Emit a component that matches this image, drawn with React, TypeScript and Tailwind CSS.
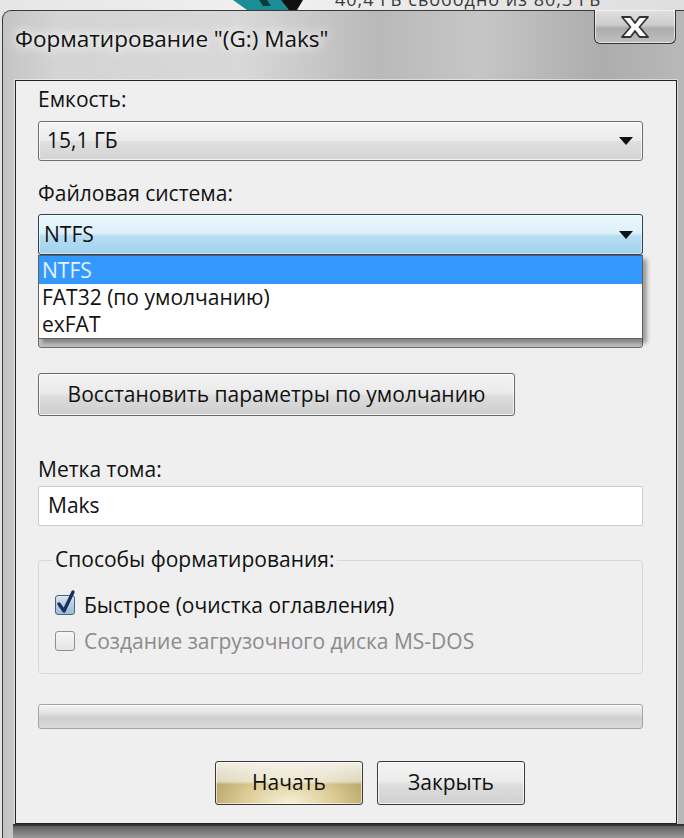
import React from "react";

function Arrow() {
  return (
    <svg width="14" height="8" viewBox="0 0 14 8" className="mr-[9px] shrink-0">
      <path d="M0 0 L14 0 L7 8 Z" fill="#111" />
    </svg>
  );
}

export default function App() {
  return (
    <div className="w-[684px] h-[838px] overflow-hidden bg-[#e4e4e4] font-['Open_Sans',sans-serif] text-[#111]">
      {/* desktop strip behind the window */}
      <div className="h-[10px] overflow-hidden flex items-start bg-[linear-gradient(90deg,#e6e6e6,#f0f0f0_40%,#dedede)]">
        <svg width="70" height="10" viewBox="0 0 70 10" className="ml-[233px] shrink-0">
          <path d="M0 0 L50 0 L58 10 L14 10 Z" fill="#1d8d95" />
          <path d="M48 0 L70 0 L64 10 L56 10 Z" fill="#111" />
          <path d="M26 0 L34 0 L38 6 L30 6 Z" fill="#0a3a40" />
        </svg>
        <div className="ml-[32px] mt-[-11px] text-[18px] leading-[20px] text-[#3a3a3a] tracking-[1px] whitespace-nowrap">
          40,4 ГБ свободно из 80,3 ГБ
        </div>
      </div>

      {/* window */}
      <div className="ml-[2px] h-[828px] rounded-tl-[9px] border-t border-l border-[#3a3a3a] bg-[linear-gradient(90deg,#c4c4c4_0%,#d4d4d4_8%,#d8d8d8_35%,#b9b9b9_55%,#c6c6c6_70%,#adadad_88%,#b8b8b8_100%)] flex flex-col">
        {/* title bar */}
        <div className="h-[69px] flex items-start justify-between">
          <div className="pl-[12px] pt-[13px] text-[22.5px] leading-[30px] whitespace-nowrap [text-shadow:0_0_10px_#ffffff,0_0_16px_#ffffff]">
            Форматирование "(G:) Maks"
          </div>
          <div className="mt-[-1px] mr-[8px] w-[82px] h-[34px] rounded-b-[6px] border border-t-0 border-[#333] bg-[linear-gradient(180deg,#e0e0e0_0%,#cdcdcd_45%,#acacac_55%,#c0c0c0_100%)] shadow-[inset_0_0_0_1px_rgba(255,255,255,0.6)] flex items-center justify-center">
            <svg width="30" height="24" viewBox="0 0 30 24">
              <path
                d="M2 2 L10.5 2 L15 8 L19.5 2 L28 2 L19.5 12 L28 22 L19.5 22 L15 16 L10.5 22 L2 22 L10.5 12 Z"
                fill="#ffffff"
                stroke="#333"
                strokeWidth="1.8"
                strokeLinejoin="round"
              />
            </svg>
          </div>
        </div>

        {/* client area */}
        <div className="ml-[12px] w-[662px] h-[744px] border border-[#222] bg-[#efefef] shadow-[0_0_0_1px_rgba(255,255,255,0.5)] pl-[22px] pr-[33px] flex flex-col text-[21px]">
          <div className="mt-[5px] h-[26px] leading-[26px]">Емкость:</div>
          <div className="mt-[9px] h-[40px] rounded-[3px] border border-[#6f6f6f] bg-[linear-gradient(180deg,#f4f4f4_0%,#ececec_48%,#dfdfdf_52%,#d3d3d3_100%)] shadow-[inset_0_0_0_1px_rgba(255,255,255,0.7)] flex items-center justify-between pl-[8px]">
            <span>15,1 ГБ</span>
            <Arrow />
          </div>

          <div className="mt-[19px] h-[26px] leading-[26px]">Файловая система:</div>
          <div className="relative z-10 mt-[8px] h-[41px]">
            <div className="h-full rounded-[3px] border border-[#26435a] bg-[linear-gradient(180deg,#eef8fd_0%,#dcf0fb_46%,#b9def3_54%,#9fd0ee_100%)] shadow-[inset_0_0_0_1px_rgba(255,255,255,0.5)] flex items-center justify-between pl-[5px]">
              <span>NTFS</span>
              <Arrow />
            </div>
            {/* open list */}
            <div className="absolute left-0 top-full w-full border border-[#5f5f5f] bg-white shadow-[4px_4px_4px_rgba(0,0,0,0.35)] flex flex-col">
              <div className="h-[28px] leading-[28px] pl-[3px] bg-[#3399ff] text-[#e8f3ff]">NTFS</div>
              <div className="h-[27px] leading-[27px] pl-[3px]">FAT32 (по умолчанию)</div>
              <div className="h-[27px] leading-[27px] pl-[3px]">exFAT</div>
            </div>
          </div>

          {/* combo hidden under the open list */}
          <div className="mt-[53px] h-[40px] rounded-[3px] border border-[#6f6f6f] bg-[linear-gradient(180deg,#f4f4f4_0%,#ececec_48%,#cfcfcf_70%,#bdbdbd_100%)]" />

          <div className="mt-[25px] w-[477px] h-[43px] rounded-[3px] border border-[#6a6a6a] bg-[linear-gradient(180deg,#f3f3f3_0%,#ebebeb_45%,#dcdcdc_55%,#cdcdcd_100%)] shadow-[inset_0_0_0_1px_rgba(255,255,255,0.75)] flex items-center justify-center">
            Восстановить параметры по умолчанию
          </div>

          <div className="mt-[40px] h-[26px] leading-[26px]">Метка тома:</div>
          <div className="mt-[4px] h-[40px] border border-[#c9cbcf] rounded-[2px] bg-white flex items-center pl-[9px]">
            Maks
          </div>

          <div className="relative mt-[34px] h-[114px] rounded-[4px] border border-[#d3d8dc] pt-[31px] pl-[16px] flex flex-col gap-[10px]">
            <div className="absolute left-[13px] top-[-15px] h-[26px] leading-[26px] px-[3px] bg-[#efefef]">
              Способы форматирования:
            </div>
            <div className="h-[26px] flex items-center">
              <div className="relative w-[20px] h-[20px] rounded-[3px] border border-[#4d6478] bg-[linear-gradient(180deg,#d8e6f2_0%,#b4cde3_50%,#9dbcd8_100%)] shrink-0">
                <svg width="22" height="26" viewBox="0 0 22 26" className="absolute left-[-1px] top-[-7px] overflow-visible">
                  <path d="M4 15 L9 22 L18 3" fill="none" stroke="#1b2f5c" strokeWidth="3.4" strokeLinecap="round" strokeLinejoin="round" />
                </svg>
              </div>
              <span className="ml-[9px] leading-[26px]">Быстрое (очистка оглавления)</span>
            </div>
            <div className="h-[26px] flex items-center">
              <div className="w-[20px] h-[20px] rounded-[3px] border border-[#8e8f8f] bg-[linear-gradient(180deg,#f6f6f6_0%,#e6e6e6_100%)] shrink-0" />
              <span className="ml-[9px] leading-[26px] text-[#8b8b8b]">Создание загрузочного диска MS-DOS</span>
            </div>
          </div>

          <div className="mt-[30px] h-[25px] rounded-[3px] border border-[#a3a3a3] bg-[linear-gradient(180deg,#f2f2f2_0%,#e3e3e3_35%,#cfcfcf_55%,#dadada_100%)] shadow-[inset_0_1px_0_#ffffff]" />

          <div className="mt-[32px] h-[44px] flex">
            <div className="ml-[177px] w-[148px] h-[44px] rounded-[3px] border border-[#3a3a3a] bg-[linear-gradient(180deg,rgba(255,255,255,0.85)_0%,rgba(255,255,255,0.55)_46%,rgba(255,255,255,0)_54%),radial-gradient(ellipse_at_50%_100%,#f7f1da_0%,#dccb94_45%,#a38f52_100%)] shadow-[inset_0_0_0_1px_rgba(255,255,255,0.6)] flex items-center justify-center">
              Начать
            </div>
            <div className="ml-[14px] w-[148px] h-[44px] rounded-[3px] border border-[#3a3a3a] bg-[linear-gradient(180deg,#f4f4f4_0%,#ececec_45%,#dddddd_55%,#cfcfcf_100%)] shadow-[inset_0_0_0_1px_rgba(255,255,255,0.75)] flex items-center justify-center">
              Закрыть
            </div>
          </div>
        </div>
        <div className="flex-1 ml-[10px] border-t-2 border-[#333] bg-[linear-gradient(180deg,#5e5e5e,#9a9a9a)]" />
      </div>
    </div>
  );
}
